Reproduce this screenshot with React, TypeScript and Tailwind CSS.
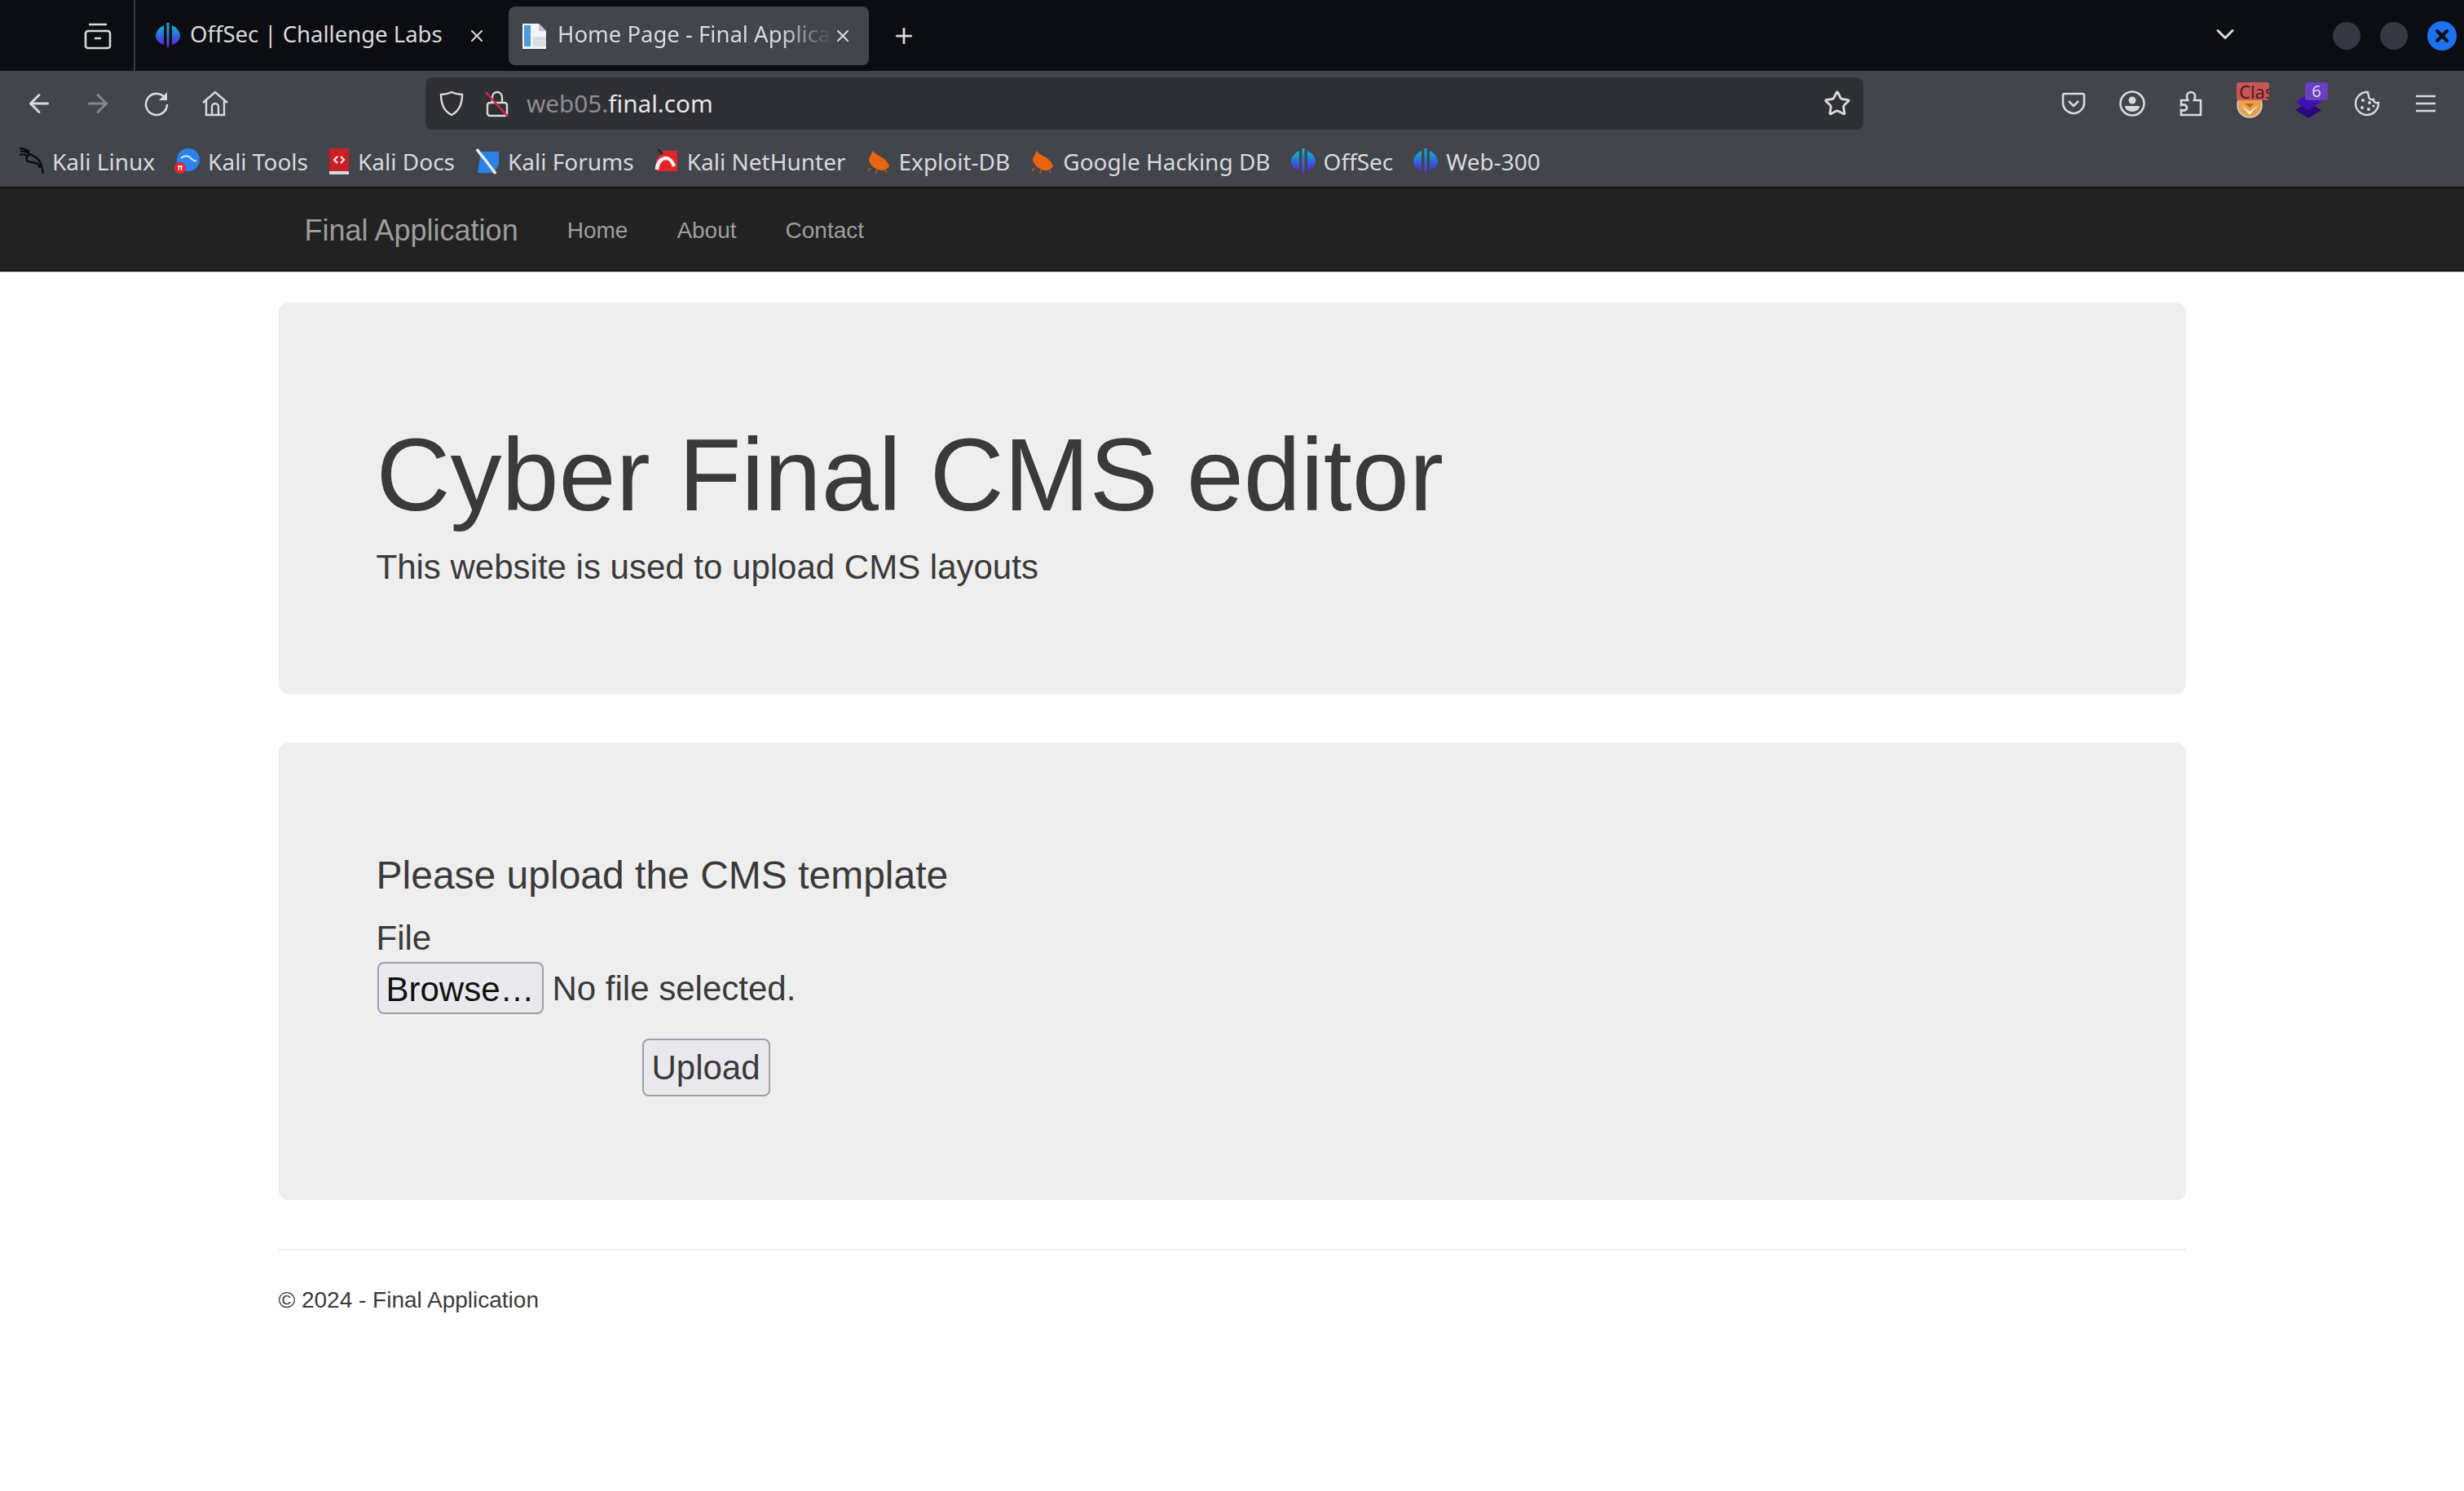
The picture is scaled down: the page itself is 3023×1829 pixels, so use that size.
import { ArrowLeft, ArrowRight, ChevronDown, Plus, Star, X } from "lucide-react";

const chrome = "font-['Noto_Sans','Open_Sans',sans-serif]";

function OffSecIcon() {
  return (
    <svg viewBox="0 0 32 34" className="h-[34px] w-8 shrink-0">
      <defs>
        <linearGradient id="offsec" x1="0" y1="0" x2="0" y2="1">
          <stop offset="0" stopColor="#12b5d0" />
          <stop offset="0.55" stopColor="#2a6ad8" />
          <stop offset="1" stopColor="#6a1fe0" />
        </linearGradient>
      </defs>
      <path d="M11 4C5 7 1 12 1 17c0 5 4 9 10 11z" fill="url(#offsec)" />
      <path d="M21 4c6 3 10 8 10 13 0 5-4 9-10 11z" fill="url(#offsec)" />
      <path d="M14.5 1h3v26l-1.5 7-1.5-7z" fill="url(#offsec)" />
    </svg>
  );
}

function PageIcon() {
  return (
    <svg viewBox="0 0 32 36" className="h-9 w-8 shrink-0">
      <path d="M1 3h20l9 9v22H1z" fill="#f2f4f7" />
      <rect x="3" y="5" width="8" height="26" fill="#4a9bd8" />
      <rect x="14" y="19" width="16" height="12" fill="#d9dde2" />
      <path d="M21 3l9 9h-9z" fill="#c3c8cf" />
    </svg>
  );
}

function DragonIcon() {
  return (
    <svg viewBox="0 0 32 34" className="h-[34px] w-8 shrink-0" fill="none" stroke="#0b0b0e" strokeWidth="2.4">
      <path d="M1 1c5 0 9 2 12 4M2 5c4-1 8 0 12 3 4 2 8 4 11 8 3 4 4 9 5 16" />
      <path d="M14 8c-3 2-6 5-4 8 2 2 7 2 11 3 3 1 5 3 5 6" />
      <path d="M1 9c3-1 6-1 9 1" />
    </svg>
  );
}

function KaliToolsIcon() {
  return (
    <svg viewBox="0 0 32 32" className="h-8 w-8 shrink-0">
      <circle cx="17" cy="14" r="14" fill="#2b82e8" />
      <path d="M8 12c5-4 9-3 12 0s5 4 7 3" fill="none" stroke="#d7e9fb" strokeWidth="2" />
      <circle cx="7" cy="24" r="7" fill="#e0262b" />
      <path d="M4 22h6M5.5 22v5M8.5 22v5" stroke="#fff" strokeWidth="1.3" />
    </svg>
  );
}

function KaliDocsIcon() {
  return (
    <svg viewBox="0 0 28 32" className="h-8 w-7 shrink-0">
      <rect x="2" y="0" width="24" height="28" fill="#c91f25" />
      <rect x="2" y="28" width="24" height="4" fill="#d9d9dc" />
      <path d="M12 10l-4 4 4 4M16 10l4 4-4 4" fill="none" stroke="#fff" strokeWidth="2" />
    </svg>
  );
}

function KaliForumsIcon() {
  return (
    <svg viewBox="0 0 32 32" className="h-8 w-8 shrink-0">
      <path d="M8 4h22v16l-6 10H4z" fill="#2b82e8" />
      <path d="M3 1c4 6 8 10 11 14s7 9 12 16" fill="none" stroke="#eef0f3" strokeWidth="3.4" />
    </svg>
  );
}

function NetHunterIcon() {
  return (
    <svg viewBox="0 0 32 32" className="h-8 w-8 shrink-0">
      <path d="M12 3h17v25H3V14z" fill="#e3242b" />
      <path d="M4 26c0-8 5-14 11-14 4 0 8 4 10 10" fill="none" stroke="#f1f1f3" strokeWidth="4.5" />
      <path d="M5 1l6 6" stroke="#222" strokeWidth="2" />
    </svg>
  );
}

function ExploitIcon() {
  return (
    <svg viewBox="0 0 32 32" className="h-8 w-8 shrink-0">
      <path d="M9 3c3 4 7 6 11 8 5 3 8 7 9 11-3 5-9 6-14 4C9 24 5 19 4 14c1-4 3-8 5-11z" fill="#e8640f" />
      <path d="M6 24l-3 4M14 26l-1 5M24 26l2 4" stroke="#c4560f" strokeWidth="1.6" />
    </svg>
  );
}

function Bookmark({ icon, label }: { icon: React.ReactNode; label: string }) {
  return (
    <div className="flex items-center gap-[9px] text-[28px] text-[#d8d9dc]">
      {icon}
      <span>{label}</span>
    </div>
  );
}

function Slot({ children }: { children?: React.ReactNode }) {
  return <div className="relative flex h-full w-[72px] items-center justify-center">{children}</div>;
}

function TabStrip() {
  return (
    <div className="flex h-[87px] items-center bg-[#0c0d12] text-[#d8d9dc]">
      <div className="flex h-full w-[166px] items-center justify-end border-r-2 border-[#3a3b42] pr-[27px]">
        <svg viewBox="0 0 34 34" className="h-[34px] w-[34px]" fill="none" stroke="#d8d9dc" strokeWidth="2.6">
          <rect x="2" y="11" width="30" height="21" rx="3" />
          <path d="M6 3h22M13 20h8" />
        </svg>
      </div>
      <div className="flex w-[458px] items-center pl-[24px]">
        <OffSecIcon />
        <span className="ml-[11px] -mt-[3px] w-[340px] text-[27.5px]">OffSec | Challenge Labs</span>
        <X size={24} strokeWidth={2} />
      </div>
      <div className="flex h-[72px] w-[442px] items-center rounded-lg bg-[#43454d] pl-[16px]">
        <PageIcon />
        <span className="ml-[12px] -mt-[3px] w-[336px] overflow-hidden text-[27.5px] whitespace-nowrap [mask-image:linear-gradient(to_right,black_82%,transparent)]">
          Home Page - Final Application
        </span>
        <X size={24} strokeWidth={2} className="ml-[2px]" />
      </div>
      <Plus size={30} strokeWidth={2.2} className="ml-[28px]" />
      <ChevronDown size={36} strokeWidth={2} className="ml-[1588px] -mt-[4px]" />
      <div className="ml-[114px] flex items-center gap-[24px]">
        <span className="h-[34px] w-[34px] rounded-full bg-[#343842]" />
        <span className="h-[34px] w-[34px] rounded-full bg-[#343842]" />
        <span className="flex h-[36px] w-[36px] items-center justify-center rounded-full bg-[#1c71f0]">
          <X size={24} strokeWidth={4} className="text-[#0c0d12]" />
        </span>
      </div>
    </div>
  );
}

function NavToolbar() {
  const icon = "#d8d9dc";
  return (
    <div className="flex h-[80px] items-center pl-[12px]">
      <div className="flex h-full w-[72px] items-center justify-center">
        <ArrowLeft size={36} strokeWidth={2} color={icon} />
      </div>
      <div className="flex h-full w-[72px] items-center justify-center">
        <ArrowRight size={36} strokeWidth={2} color="#85868c" />
      </div>
      <div className="flex h-full w-[72px] items-center justify-center">
        <svg viewBox="0 0 32 32" className="h-8 w-8" fill="none" stroke={icon} strokeWidth="2.6">
          <path d="M27 10A13 13 0 1 0 29 17" />
          <path d="M29 2v10H19z" fill={icon} stroke="none" />
        </svg>
      </div>
      <div className="flex h-full w-[72px] items-center justify-center">
        <svg viewBox="0 0 32 32" className="h-8 w-8" fill="none" stroke={icon} strokeWidth="2.4">
          <path d="M1 15L16 2l15 13M5 12v18h22V12M12 30V20a4 4 0 0 1 8 0v10" />
        </svg>
      </div>
      <div className="ml-[222px] flex h-[64px] w-[1764px] items-center rounded-lg bg-[#2f3036]">
        <svg viewBox="0 0 30 32" className="ml-[17px] h-8 w-[30px]" fill="none" stroke={icon} strokeWidth="2.4">
          <path d="M15 2C11 4 7 5 2 5c0 11 3 20 13 25C25 25 28 16 28 5c-5 0-9-1-13-3z" />
        </svg>
        <svg viewBox="0 0 30 34" className="ml-[26px] h-[34px] w-[30px]" fill="none">
          <path d="M9 16V9a6 6 0 0 1 12 0v7" stroke={icon} strokeWidth="2.4" />
          <rect x="3" y="16" width="24" height="16" rx="3" stroke={icon} strokeWidth="2.4" />
          <path d="M1 3l27 30" stroke="#e0224e" strokeWidth="2.6" />
        </svg>
        <span className="ml-[21px] text-[29.7px] text-[#8c8d92]">
          web05.<span className="text-[#e6e6e8]">final.com</span>
        </span>
        <Star size={34} strokeWidth={2} color={icon} className="mr-[15px] ml-auto" />
      </div>
      <div className="ml-[222px] flex h-full items-center">
        <Slot>
          <svg viewBox="0 0 30 28" className="h-[28px] w-[30px]" fill="none" stroke={icon} strokeWidth="2.6">
            <path d="M4 2h22a2 2 0 0 1 2 2v9a13 13 0 0 1-26 0V4a2 2 0 0 1 2-2z" />
            <path d="M9 11l6 6 6-6" />
          </svg>
        </Slot>
        <Slot>
          <svg viewBox="0 0 32 32" className="h-8 w-8" fill="none" stroke={icon} strokeWidth="2.6">
            <circle cx="16" cy="16" r="14.5" />
            <circle cx="16" cy="12" r="4.5" fill={icon} stroke="none" />
            <path d="M7 19h18c0 4-4 7-9 7s-9-3-9-7z" fill={icon} stroke="none" />
          </svg>
        </Slot>
        <Slot>
          <svg viewBox="0 0 28 32" className="h-8 w-7" fill="none" stroke={icon} strokeWidth="2.6">
            <path d="M2 30h24V12h-8c1-2 1-3 1-5a5 5 0 0 0-10 0c0 2 0 3 1 5H2v6c2-1 7-1 7 3s-5 4-7 3z" />
          </svg>
        </Slot>
        <Slot>
          <svg viewBox="0 0 32 32" className="mt-[4px] h-8 w-8">
            <circle cx="16" cy="16" r="15" fill="#e9a04e" stroke="#d9d3c8" strokeWidth="1.5" />
            <path d="M6 16l10 8 10-8-10 12z" fill="#f3f0ea" />
            <path d="M10 14h12l-6 5z" fill="#c9601c" />
          </svg>
          <span className="absolute top-[14px] left-[20px] h-[22px] w-[40px] overflow-hidden rounded-[3px] bg-[#c95557] pl-[3px] text-[22px] leading-[22px] text-[#4b1c1f]">
            Clas
          </span>
        </Slot>
        <Slot>
          <svg viewBox="0 0 32 30" className="mt-[6px] h-[30px] w-8">
            <path d="M16 10l16 10-16 10L0 20z" fill="#2c0880" />
            <path d="M16 0l16 10-16 10L0 10z" fill="#4110b0" />
          </svg>
          <span className="absolute top-[14px] left-[32px] h-[22px] w-[28px] rounded-[3px] bg-[#6b3fc4] text-center text-[20px] leading-[22px] text-[#e0d4f7]">
            6
          </span>
        </Slot>
        <Slot>
          <svg viewBox="0 0 32 32" className="h-8 w-8" fill="none" stroke={icon} strokeWidth="2.4">
            <path d="M17 2a14 14 0 1 0 13 13c-3 1-6-1-6-4-3 1-6-1-6-4 0-2-1-3-1-5z" />
            <g fill={icon} stroke="none">
              <circle cx="11" cy="12" r="2" />
              <circle cx="19" cy="15" r="2" />
              <circle cx="10" cy="21" r="2" />
              <circle cx="18" cy="23" r="2" />
              <circle cx="24" cy="19" r="1.5" />
            </g>
          </svg>
        </Slot>
        <Slot>
          <svg viewBox="0 0 26 22" className="h-[22px] w-[26px]" stroke={icon} strokeWidth="2.6">
            <path d="M1 2h24M1 11h24M1 20h24" />
          </svg>
        </Slot>
      </div>
    </div>
  );
}

function BookmarksBar() {
  return (
    <div className="flex h-[62px] items-center gap-[24px] pl-[23px]">
      <Bookmark icon={<DragonIcon />} label="Kali Linux" />
      <Bookmark icon={<KaliToolsIcon />} label="Kali Tools" />
      <Bookmark icon={<KaliDocsIcon />} label="Kali Docs" />
      <Bookmark icon={<KaliForumsIcon />} label="Kali Forums" />
      <Bookmark icon={<NetHunterIcon />} label="Kali NetHunter" />
      <Bookmark icon={<ExploitIcon />} label="Exploit-DB" />
      <Bookmark icon={<ExploitIcon />} label="Google Hacking DB" />
      <Bookmark icon={<OffSecIcon />} label="OffSec" />
      <Bookmark icon={<OffSecIcon />} label="Web-300" />
    </div>
  );
}

function SiteNav() {
  return (
    <nav className="h-[104px] border-y-2 border-t-[#17171a] border-b-[#111111] bg-[#222222] text-[#9d9d9d] shadow-[0_1px_0_#b5b5b5]">
      <div className="mx-auto flex h-full w-[2340px] items-center px-[32px] pt-[3px]">
        <a className="mr-[60px] text-[36px]">Final Application</a>
        <div className="flex gap-[60px] text-[28px]">
          <a>Home</a>
          <a>About</a>
          <a>Contact</a>
        </div>
      </div>
    </nav>
  );
}

export default function App() {
  return (
    <div className="min-h-[1829px] bg-white font-['Liberation_Sans',Arial,sans-serif] text-[#3a3a3a]">
      <header className={`${chrome} bg-[#43454d]`}>
        <TabStrip />
        <NavToolbar />
        <BookmarksBar />
      </header>
      <SiteNav />

      <main className="mx-auto w-[2340px] pt-[38px]">
        <section className="mb-[60px] h-[480px] rounded-xl bg-[#eeeeee] px-[120px] py-[96px]">
          <h1 className="mt-[46px] mb-[14px] text-[126px] leading-[139px]">Cyber Final CMS editor</h1>
          <p className="text-[42px] leading-[60px]">This website is used to upload CMS layouts</p>
        </section>

        <section className="h-[561px] rounded-xl bg-[#eeeeee] px-[120px] py-[96px]">
          <h3 className="mt-[40px] mb-[21px] text-[48px] leading-[53px]">Please upload the CMS template</h3>
          <label className="block text-[42px] leading-[60px]">File</label>
          <div className="-mt-[1px] flex h-[64px] items-center pl-[1px] text-[42px]">
            <button className="h-[64px] w-[204px] rounded-lg border-2 border-[#9f9fad] bg-[#e9e9ed] text-[#111111]">
              Browse…
            </button>
            <span className="ml-[11px]">No file selected.</span>
          </div>
          <button className="mt-[30px] ml-[326px] block h-[71px] w-[157px] rounded-lg border-2 border-[#9f9fad] bg-[#e9e9ed] text-[42px]">
            Upload
          </button>
        </section>

        <footer className="mt-[60px] border-t-2 border-[#eeeeee] pt-[41px] text-[28px] leading-[40px]">
          © 2024 - Final Application
        </footer>
      </main>
    </div>
  );
}
